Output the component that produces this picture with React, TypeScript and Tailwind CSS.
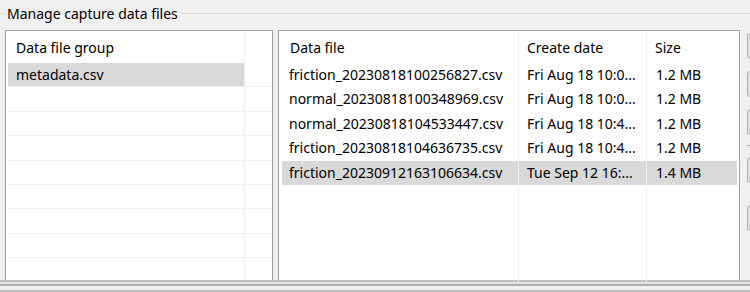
import React from 'react';

interface DataFile {
  name: string;
  created: string;
  size: string;
}

const groups = ['metadata.csv'];

const files: DataFile[] = [
  { name: 'friction_20230818100256827.csv', created: 'Fri Aug 18 10:0...', size: '1.2 MB' },
  { name: 'normal_20230818100348969.csv', created: 'Fri Aug 18 10:0...', size: '1.2 MB' },
  { name: 'normal_20230818104533447.csv', created: 'Fri Aug 18 10:4...', size: '1.2 MB' },
  { name: 'friction_20230818104636735.csv', created: 'Fri Aug 18 10:4...', size: '1.2 MB' },
  { name: 'friction_20230912163106634.csv', created: 'Tue Sep 12 16:...', size: '1.4 MB' },
];

const GROUP_ROWS = 9;
const selectedGroup = 0;
const selectedFile = 4;

const SideButtons: React.FC = () => (
  <div className="flex flex-col w-[60px] shrink-0 pt-[3px]">
    <div className="h-[26px] rounded-[3px] border border-[#adadad] bg-[#e1e1e1]" />
    <div className="h-[26px] mt-[12px] rounded-[3px] border border-[#adadad] bg-[#e1e1e1]" />
    <div className="h-[26px] mt-[12px] rounded-[3px] border border-[#adadad] bg-[#e1e1e1]" />
    <div className="h-px mt-[10px] bg-[#a0a0a0]" />
    <div className="h-[26px] mt-[11px] rounded-[3px] border border-[#adadad] bg-[#e1e1e1]" />
    <div className="h-[26px] mt-[22px] rounded-[3px] border border-[#adadad] bg-[#e1e1e1]" />
  </div>
);

export default function App() {
  return (
    <div
      className="w-[750px] h-[292px] bg-[#f0f0f0] overflow-hidden text-black text-[14px]"
      style={{ fontFamily: '"Noto Sans", "Liberation Sans", sans-serif' }}
    >
      {/* group box title */}
      <div className="flex items-center h-[27px]">
        <div className="w-[5px] h-px bg-[#dcdcdc]" />
        <span className="px-[2px] leading-[27px]">Manage capture data files</span>
        <div className="flex-1 h-px bg-[#dcdcdc]" />
      </div>

      <div className="flex h-[253px] pt-[3px] pl-[5px]">
        {/* group list */}
        <div className="w-[268px] shrink-0 border border-b-0 border-[#a0a0a0] bg-white pl-[2px] pt-px overflow-hidden">
          <div className="flex h-[31px]">
            <div className="w-[237px] border-r border-[#eaeff5] pl-[8px] leading-[31px]">Data file group</div>
            <div className="flex-1" />
          </div>
          {Array.from({ length: GROUP_ROWS }).map((_, i) => (
            <div key={i} className="flex h-[24.4px] border-b border-[#f0f0f0]">
              <div
                className={`w-[237px] border-r border-[#eaeff5] pl-[8px] leading-[23px] ${
                  i === selectedGroup ? 'bg-[#d9d9d9]' : ''
                }`}
              >
                {groups[i] ?? ''}
              </div>
              <div className="flex-1" />
            </div>
          ))}
        </div>

        {/* file list */}
        <div className="w-[462px] shrink-0 ml-[5px] border border-b-0 border-[#a0a0a0] bg-white pl-[3px] pr-[2px] pt-px">
          <div className="flex h-[31px] leading-[31px]">
            <div className="w-[237px] border-r border-[#eaeff5] pl-[8px]">Data file</div>
            <div className="w-[128px] border-r border-[#eaeff5] pl-[8px]">Create date</div>
            <div className="flex-1 pl-[8px]">Size</div>
          </div>
          <div className="flex h-[220px]">
            <div className="w-[237px] border-r border-[#eaeff5]" />
            <div className="w-[128px] border-r border-[#eaeff5]" />
            <div className="flex-1" />
          </div>
          <div className="-mt-[220px]">
            {files.map((f, i) => (
              <div
                key={f.name}
                className={`flex h-[24.4px] leading-[24px] ${i === selectedFile ? 'bg-[#d9d9d9]' : ''}`}
              >
                <div className="w-[237px] pl-[7px] whitespace-nowrap overflow-hidden">{f.name}</div>
                <div className="w-[128px] pl-[8px] whitespace-nowrap overflow-hidden">{f.created}</div>
                <div className="flex-1 pl-[9px] whitespace-nowrap">{f.size}</div>
              </div>
            ))}
          </div>
        </div>

        <div className="ml-[7px]">
          <SideButtons />
        </div>
      </div>

      {/* bottom edges */}
      <div className="h-[2px] bg-[#bdbdbd]" />
      <div className="h-[2px] bg-[#e3e3e3]" />
      <div className="h-[2px] bg-[#adadad]" />
      <div className="h-[4px]" />
      <div className="h-[2px] bg-[#bcbcbc]" />
    </div>
  );
}
